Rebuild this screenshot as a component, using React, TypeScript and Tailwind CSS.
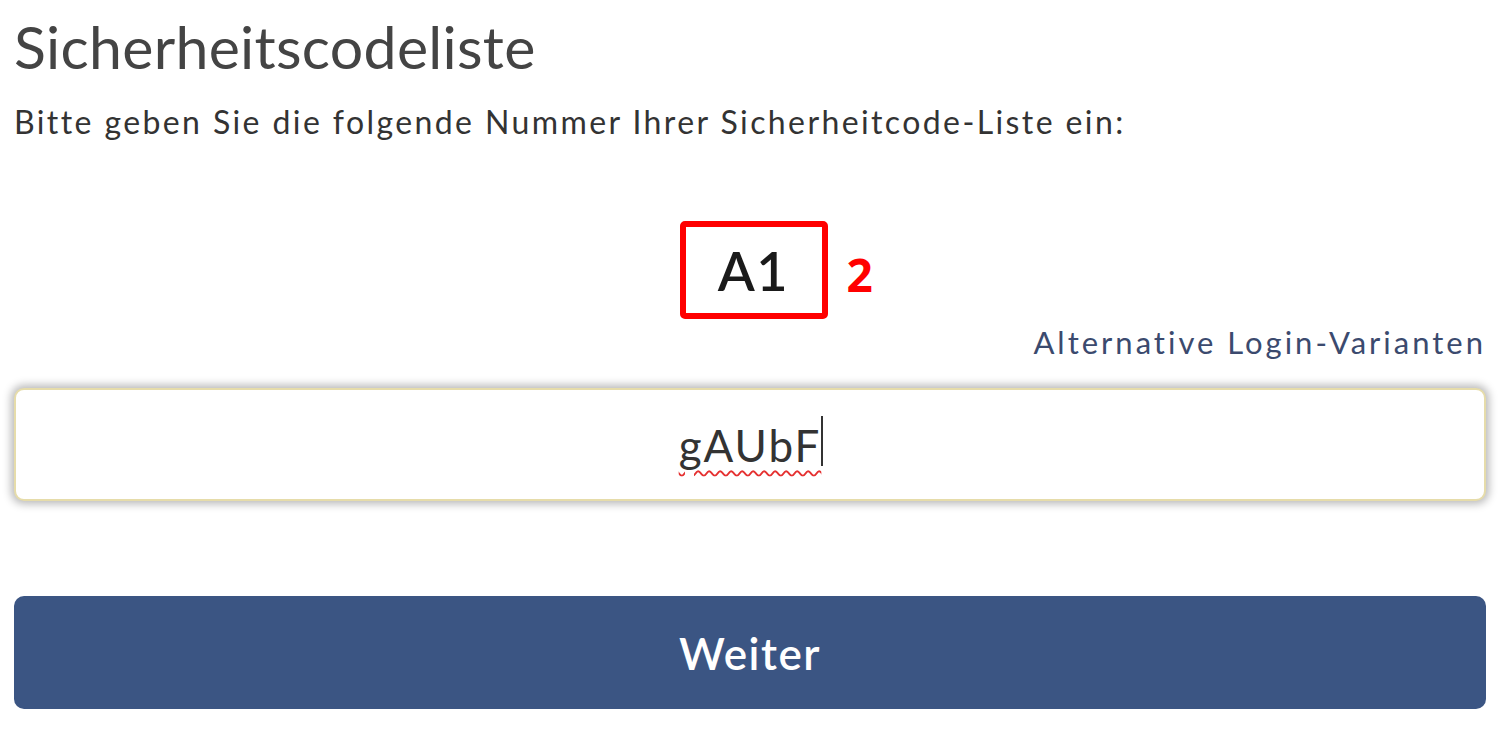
export default function App() {
  return (
    <div className="min-h-screen bg-white px-[14px] font-['Lato',sans-serif] text-[#333]">
      <h1 className="pt-[12px] text-[59px] leading-[70px] font-normal tracking-[0.3px] text-[#444]">
        Sicherheitscodeliste
      </h1>
      <p className="mt-[22px] text-[32px] leading-[36px] tracking-[2.4px] text-[#333]">
        Bitte geben Sie die folgende Nummer Ihrer Sicherheitcode-Liste ein:
      </p>

      <div className="mt-[81px] flex justify-center">
        <div className="relative ml-[7px]">
          <div className="flex h-[98px] w-[148px] items-center justify-center rounded-[5px] border-[6px] border-[#ff0000]">
            <span className="text-[54px] font-semibold tracking-[1.5px] text-[#1a1a1a]">A1</span>
          </div>
          <span className="absolute left-[167px] top-[30px] font-['Open_Sans',sans-serif] text-[46px] leading-none font-bold text-[#ff0000]">
            2
          </span>
        </div>
      </div>

      <div className="mt-[3px] flex justify-end">
        <a className="text-[31px] leading-[40px] tracking-[3px] text-[#3b4a6e]">Alternative Login-Varianten</a>
      </div>

      <div className="mt-[26px] flex h-[113px] items-center justify-center rounded-[10px] border-2 border-[#e6dcaa] bg-white shadow-[0_0_9px_3px_rgba(0,0,0,0.28)]">
        <span className="relative text-[44px] tracking-[2px] text-[#333] underline decoration-wavy decoration-[#e53030] decoration-[2px] underline-offset-[8px]">
          gAUbF
          <span className="absolute -right-[2px] top-[4px] h-[50px] w-[2px] bg-[#333]" />
        </span>
      </div>

      <button className="mt-[95px] flex h-[113px] w-full items-center justify-center rounded-[10px] bg-[#3b5583] text-[44px] font-semibold tracking-[1.5px] text-white">
        Weiter
      </button>
    </div>
  );
}
